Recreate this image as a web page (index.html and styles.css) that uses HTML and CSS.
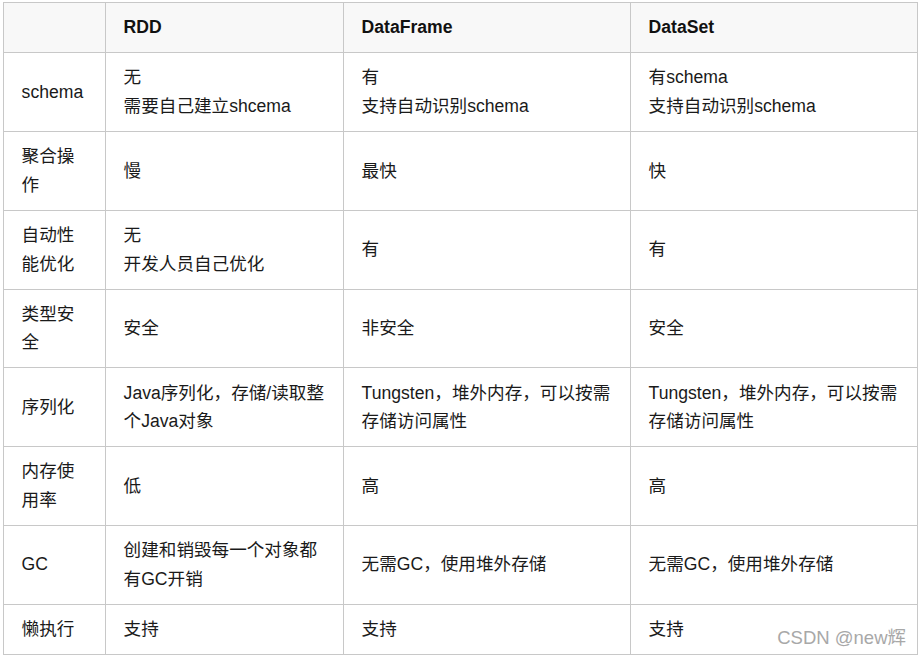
FILE: index.html
```html
<!DOCTYPE html>
<html lang="zh-CN">
<head>
<meta charset="utf-8">
<title>RDD / DataFrame / DataSet</title>
<link rel="stylesheet" href="styles.css">
</head>
<body>
<div class="page">
  <table class="cmp">
    <colgroup>
      <col class="c1"><col class="c2"><col class="c3"><col class="c4">
    </colgroup>
    <thead>
      <tr><th></th><th>RDD</th><th>DataFrame</th><th>DataSet</th></tr>
    </thead>
    <tbody>
      <tr><td>schema</td><td>无<br>需要自己建立shcema</td><td>有<br>支持自动识别schema</td><td>有schema<br>支持自动识别schema</td></tr>
      <tr><td>聚合操作</td><td>慢</td><td>最快</td><td>快</td></tr>
      <tr><td>自动性能优化</td><td>无<br>开发人员自己优化</td><td>有</td><td>有</td></tr>
      <tr><td>类型安全</td><td>安全</td><td>非安全</td><td>安全</td></tr>
      <tr><td>序列化</td><td>Java序列化，存储/读取整个Java对象</td><td>Tungsten，堆外内存，可以按需存储访问属性</td><td>Tungsten，堆外内存，可以按需存储访问属性</td></tr>
      <tr><td>内存使用率</td><td>低</td><td>高</td><td>高</td></tr>
      <tr><td>GC</td><td>创建和销毁每一个对象都有GC开销</td><td>无需GC，使用堆外存储</td><td>无需GC，使用堆外存储</td></tr>
      <tr><td>懒执行</td><td>支持</td><td>支持</td><td>支持</td></tr>
    </tbody>
  </table>
  <div class="watermark">CSDN @new辉</div>
</div>
</body>
</html>
```

FILE: styles.css
```css
html, body {
  margin: 0;
  padding: 0;
  background: #ffffff;
}
body {
  width: 919px;
  height: 655px;
  overflow: hidden;
  font-family: "Liberation Sans", Arial, "Noto Sans CJK SC", sans-serif;
  color: #1a1a1a;
}
.page {
  position: relative;
  width: 919px;
  height: 655px;
  padding: 2px 0 0 3px;
  box-sizing: border-box;
}
.cmp {
  border-collapse: collapse;
  table-layout: fixed;
  width: 914px;
  font-size: 17.6px;
  line-height: 28.6px;
}
.c1 { width: 102px; }
.c2 { width: 238px; }
.c3 { width: 287px; }
.c4 { width: 287px; }
.cmp th,
.cmp td {
  border: 1px solid #c8c8c8;
  padding: 10.3px 17.6px;
  text-align: left;
  vertical-align: middle;
  word-break: break-all;
}
.cmp th {
  background: #f8f8f8;
  font-weight: bold;
  color: #111;
}
.watermark {
  position: absolute;
  right: 13px;
  bottom: 6px;
  font-size: 18.5px;
  color: #a8a8a8;
  font-family: "Liberation Sans", Arial, "Noto Sans CJK SC", sans-serif;
}
```
